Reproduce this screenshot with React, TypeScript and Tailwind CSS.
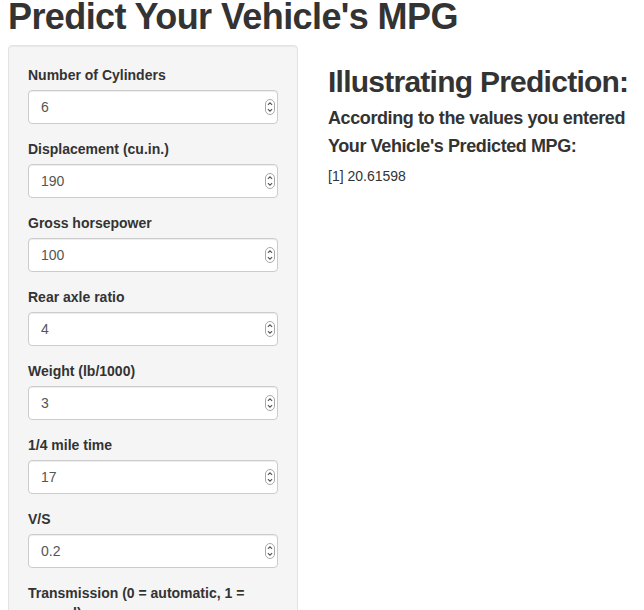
const fields = [
  { label: "Number of Cylinders", value: "6" },
  { label: "Displacement (cu.in.)", value: "190" },
  { label: "Gross horsepower", value: "100" },
  { label: "Rear axle ratio", value: "4" },
  { label: "Weight (lb/1000)", value: "3" },
  { label: "1/4 mile time", value: "17" },
  { label: "V/S", value: "0.2" },
  { label: "Transmission (0 = automatic, 1 = manual)", value: "1" },
];

function Spinner() {
  return (
    <svg width="10" height="16" viewBox="0 0 10 16" className="shrink-0">
      <rect x="0.5" y="0.5" width="9" height="15" rx="4.5" fill="#fff" stroke="#a8a8a8" />
      <path d="M2.9 5.9 L5 3.8 L7.1 5.9" fill="none" stroke="#555" strokeWidth="1.1" />
      <path d="M2.9 10.1 L5 12.2 L7.1 10.1" fill="none" stroke="#555" strokeWidth="1.1" />
    </svg>
  );
}

const NumberInput = ({ label, value }: { label: string; value: string }) => {
  return (
    <div className="mb-[15px]">
      <div className="mb-[5px] text-[14px] font-bold leading-[20px] text-[#333]">{label}</div>
      <div className="flex h-[34px] items-center justify-between rounded-[4px] border border-[#ccc] bg-white pl-[12px] pr-[2px] text-[14px] text-[#555] shadow-[inset_0_1px_1px_rgba(0,0,0,0.075)]">
        <span>{value}</span>
        <Spinner />
      </div>
    </div>
  );
};

export default function App() {
  return (
    <div
      className="h-[610px] overflow-hidden bg-white text-[#333]"
      style={{ fontFamily: '"Liberation Sans", Arial, sans-serif' }}
    >
      <h1 className="pl-[8px] text-[36px] font-bold leading-[34px] tracking-[-0.6px]">
        Predict Your Vehicle's MPG
      </h1>
      <div className="mt-[11px] flex items-start">
        <div className="ml-[8px] w-[290px] shrink-0 rounded-[4px] border border-[#e3e3e3] bg-[#f5f5f5] p-[19px] shadow-[inset_0_1px_1px_rgba(0,0,0,0.05)]">
          {fields.map((f) => (
            <NumberInput key={f.label} label={f.label} value={f.value} />
          ))}
        </div>
        <div className="ml-[30px] flex-1 whitespace-nowrap">
          <h2 className="mt-[20px] text-[30px] font-bold leading-[33px] tracking-[-0.75px]">
            Illustrating Prediction:
          </h2>
          <h4 className="mt-[10px] text-[18px] font-bold leading-[20px] tracking-[-0.4px]">
            According to the values you entered
          </h4>
          <h4 className="mt-[8px] text-[18px] font-bold leading-[20px] tracking-[-0.4px]">
            Your Vehicle's Predicted MPG:
          </h4>
          <div className="mt-[10px] text-[14px] leading-[20px]">[1] 20.61598</div>
        </div>
      </div>
    </div>
  );
}
